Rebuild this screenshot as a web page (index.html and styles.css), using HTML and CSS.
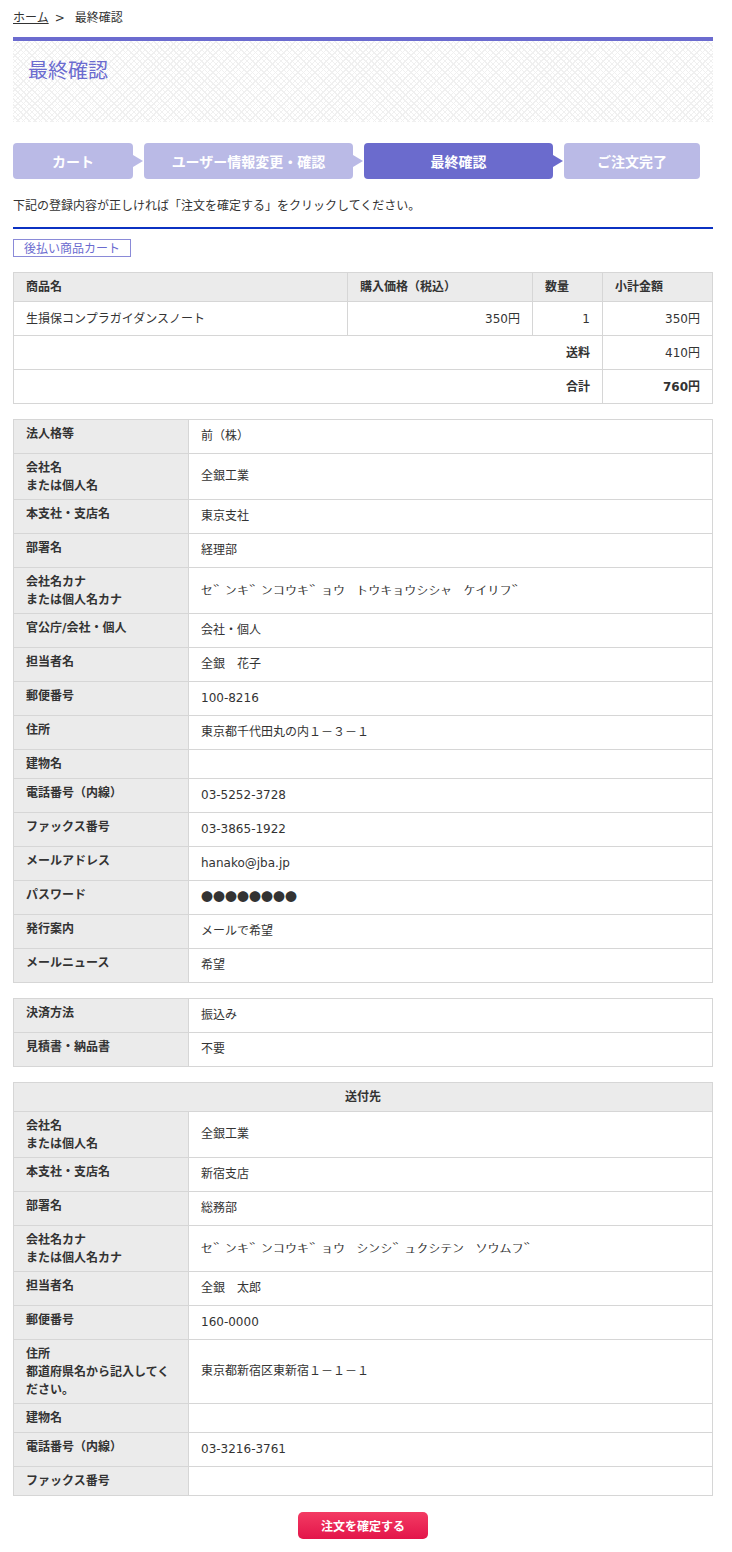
FILE: index.html
```html
<html lang="ja">

<head>
  <meta charset="UTF-8">
  <meta name="viewport" content="width=device-width, initial-scale=1.0">
  <title>最終確認</title>
  <link rel="stylesheet" href="styles.css">
</head>

<body>
  <div class="page">
    <div class="breadcrumb">
      <a href="#">ホーム</a><span class="sep">&gt;</span><span>最終確認</span>
    </div>

    <div class="page-head">
      <h1>最終確認</h1>
    </div>

    <ol class="steps">
      <li class="step step-cart">カート</li>
      <li class="step step-user">ユーザー情報変更・確認</li>
      <li class="step step-final current">最終確認</li>
      <li class="step step-done">ご注文完了</li>
    </ol>

    <p class="lead">下記の登録内容が正しければ「注文を確定する」をクリックしてください。</p>

    <div class="cart-label">後払い商品カート</div>

    <table class="cart-table">
      <thead>
        <tr>
          <th class="col-name">商品名</th>
          <th class="col-price">購入価格（税込）</th>
          <th class="col-qty">数量</th>
          <th class="col-sub">小計金額</th>
        </tr>
      </thead>
      <tbody>
        <tr>
          <td>生損保コンプラガイダンスノート</td>
          <td class="num">350円</td>
          <td class="num">1</td>
          <td class="num">350円</td>
        </tr>
        <tr>
          <td colspan="3" class="num bold">送料</td>
          <td class="num">410円</td>
        </tr>
        <tr>
          <td colspan="3" class="num bold">合計</td>
          <td class="num bold">760円</td>
        </tr>
      </tbody>
    </table>

    <table class="info-table">
      <tr><th>法人格等</th><td>前（株）</td></tr>
      <tr><th>会社名<br>または個人名</th><td>全銀工業</td></tr>
      <tr><th>本支社・支店名</th><td>東京支社</td></tr>
      <tr><th>部署名</th><td>経理部</td></tr>
      <tr><th>会社名カナ<br>または個人名カナ</th><td><span class="kana">ｾﾞﾝｷﾞﾝｺｳｷﾞｮｳ ﾄｳｷｮｳｼｼｬ ｹｲﾘﾌﾞ</span></td></tr>
      <tr><th>官公庁/会社・個人</th><td>会社・個人</td></tr>
      <tr><th>担当者名</th><td>全銀　花子</td></tr>
      <tr><th>郵便番号</th><td>100-8216</td></tr>
      <tr><th>住所</th><td>東京都千代田丸の内１－３－１</td></tr>
      <tr><th>建物名</th><td class="empty"></td></tr>
      <tr><th>電話番号（内線）</th><td>03-5252-3728</td></tr>
      <tr><th>ファックス番号</th><td>03-3865-1922</td></tr>
      <tr><th>メールアドレス</th><td>hanako@jba.jp</td></tr>
      <tr><th>パスワード</th><td class="dots">●●●●●●●●</td></tr>
      <tr><th>発行案内</th><td>メールで希望</td></tr>
      <tr><th>メールニュース</th><td>希望</td></tr>
    </table>

    <table class="info-table">
      <tr><th>決済方法</th><td>振込み</td></tr>
      <tr><th>見積書・納品書</th><td>不要</td></tr>
    </table>

    <table class="info-table">
      <tr><th colspan="2" class="table-title">送付先</th></tr>
      <tr><th>会社名<br>または個人名</th><td>全銀工業</td></tr>
      <tr><th>本支社・支店名</th><td>新宿支店</td></tr>
      <tr><th>部署名</th><td>総務部</td></tr>
      <tr><th>会社名カナ<br>または個人名カナ</th><td><span class="kana">ｾﾞﾝｷﾞﾝｺｳｷﾞｮｳ ｼﾝｼﾞｭｸｼﾃﾝ ｿｳﾑﾌﾞ</span></td></tr>
      <tr><th>担当者名</th><td>全銀　太郎</td></tr>
      <tr><th>郵便番号</th><td>160-0000</td></tr>
      <tr><th>住所<br>都道府県名から記入してください。</th><td>東京都新宿区東新宿１－１－１</td></tr>
      <tr><th>建物名</th><td class="empty"></td></tr>
      <tr><th>電話番号（内線）</th><td>03-3216-3761</td></tr>
      <tr><th>ファックス番号</th><td class="empty"></td></tr>
    </table>

    <div class="actions">
      <button type="button" class="btn-submit">注文を確定する</button>
    </div>
  </div>
</body>

</html>
```

FILE: styles.css
```css
* {
  box-sizing: border-box;
  margin: 0;
  padding: 0;
}

body {
  font-family: "DejaVu Sans", "Noto Sans CJK JP", sans-serif;
  font-size: 12px;
  line-height: 18px;
  color: #333;
  background: #fff;
}

.page {
  width: 700px;
  margin: 0 13px;
  padding: 9px 0 16px;
}

.breadcrumb {
  height: 18px;
  font-size: 12px;
}

.breadcrumb a {
  color: #333;
  text-decoration: underline;
}

.breadcrumb .sep {
  margin: 0 10px 0 6px;
}

.page-head {
  margin-top: 10px;
  height: 85px;
  border-top: 4px solid #6b6bcf;
  padding: 17px 15px 0;
  background-color: #fff;
  background-image:
    repeating-linear-gradient(45deg, #f0f0f0 0 1px, transparent 1px 4px),
    repeating-linear-gradient(-45deg, #f0f0f0 0 1px, transparent 1px 4px);
}

.page-head h1 {
  font-size: 20px;
  line-height: 26px;
  font-weight: normal;
  color: #6b6bcf;
}

.steps {
  list-style: none;
  display: flex;
  gap: 11px;
  margin-top: 21px;
}

.step {
  position: relative;
  height: 36px;
  line-height: 36px;
  border-radius: 4px;
  background: #babae6;
  color: #fff;
  font-weight: bold;
  font-size: 14px;
  text-align: center;
  font-family: "Noto Sans CJK JP", sans-serif;
}

.step::after {
  content: "";
  position: absolute;
  top: 12px;
  right: -10px;
  border-style: solid;
  border-width: 6px 0 6px 10px;
  border-color: transparent transparent transparent #babae6;
}

.step.current {
  background: #6b6bcd;
}

.step.current::after {
  border-left-color: #6b6bcd;
}

.step-done::after {
  display: none;
}

.step-cart { width: 120px; }
.step-user { width: 209px; }
.step-final { width: 189px; }
.step-done { width: 136px; }

.lead {
  margin-top: 17px;
  padding-bottom: 13px;
  border-bottom: 2px solid #0b31c2;
  font-family: "Noto Sans CJK JP", sans-serif;
}

.cart-label {
  width: 118px;
  margin-top: 10px;
  height: 18px;
  line-height: 16px;
  border: 1px solid #8a8ad8;
  color: #6b6bcf;
  text-align: center;
  font-family: "Noto Sans CJK JP", sans-serif;
}

table {
  width: 100%;
  border-collapse: collapse;
  border: 1px solid #d6d6d6;
  font-size: 12px;
  line-height: 18px;
  color: #333;
}

th,
td {
  border: 1px solid #d6d6d6;
  text-align: left;
  padding: 0 12px;
}

.cart-table {
  margin-top: 15px;
}

.cart-table th {
  height: 29px;
  background: #ebebeb;
  font-weight: bold;
}

.cart-table td {
  height: 34px;
}

.col-name { width: 334px; }
.col-price { width: 185px; }
.col-qty { width: 70px; }

.cart-table .num {
  text-align: right;
}

.cart-table .bold {
  font-weight: bold;
}

.info-table {
  margin-top: 15px;
}

.info-table th {
  width: 175px;
  padding: 5px 12px 4px;
  background: #ebebeb;
  font-weight: bold;
  vertical-align: top;
  height: 28px;
}

.info-table td {
  padding: 7px 12px 8px;
  height: 33px;
  vertical-align: middle;
}

.info-table td.empty {
  padding: 0 12px;
  height: 29px;
}

.kana {
  display: inline-block;
  transform: scaleX(2);
  transform-origin: left center;
  font-family: "Noto Sans CJK JP", sans-serif;
  font-weight: 300;
  word-spacing: 3px;
}

.info-table td.dots {
  font-family: "Noto Sans CJK JP", sans-serif;
}

.info-table .table-title {
  width: auto;
  text-align: center;
  vertical-align: middle;
  height: 29px;
  padding: 0 12px;
}

.actions {
  display: flex;
  justify-content: center;
  margin-top: 16px;
}

.btn-submit {
  all: unset;
  display: inline-block;
  width: 130px;
  height: 27px;
  line-height: 27px;
  border-radius: 5px;
  background: linear-gradient(#f33b63, #e3154a);
  color: #fff;
  font-weight: bold;
  font-size: 12px;
  text-align: center;
  cursor: pointer;
  font-family: "Noto Sans CJK JP", sans-serif;
}
```
